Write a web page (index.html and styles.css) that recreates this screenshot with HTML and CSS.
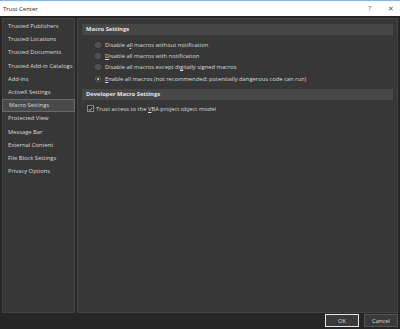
FILE: index.html
```html
<!DOCTYPE html>
<html>
<head>
<meta charset="utf-8">
<link rel="stylesheet" href="styles.css">
</head>
<body>
<div class="dialog">
  <div class="titlebar">
    <span class="title">Trust Center</span>
    <span class="tb-btns"><span class="help">?</span><span class="close">✕</span></span>
  </div>
  <div class="content">
    <div class="sidebar">
      <div class="item">Trusted Publishers</div>
      <div class="item">Trusted Locations</div>
      <div class="item">Trusted Documents</div>
      <div class="item">Trusted Add-in Catalogs</div>
      <div class="item">Add-ins</div>
      <div class="item">ActiveX Settings</div>
      <div class="item selected">Macro Settings</div>
      <div class="item">Protected View</div>
      <div class="item">Message Bar</div>
      <div class="item">External Content</div>
      <div class="item">File Block Settings</div>
      <div class="item">Privacy Options</div>
    </div>
    <div class="main">
      <div class="section-head">Macro Settings</div>
      <div class="options">
        <div class="opt"><span class="radio"></span><span>Disable a<u>l</u>l macros without notification</span></div>
        <div class="opt"><span class="radio"></span><span><u>D</u>isable all macros with notification</span></div>
        <div class="opt"><span class="radio"></span><span>Disable all macros except di<u>g</u>itally signed macros</span></div>
        <div class="opt"><span class="radio checked"></span><span><u>E</u>nable all macros (not recommended; potentially dangerous code can run)</span></div>
      </div>
      <div class="section-head">Developer Macro Settings</div>
      <div class="opt check-row"><span class="checkbox"><svg width="6" height="6" viewBox="0 0 6 6"><path d="M0.8 3.2 L2.3 4.7 L5.2 1.2" fill="none" stroke="#e8e8e8" stroke-width="0.9"/></svg></span><span>Trust access to the <u>V</u>BA project object model</span></div>
    </div>
  </div>
  <div class="footer">
    <button class="btn ok">OK</button>
    <button class="btn">Cancel</button>
  </div>
</div>
</body>
</html>
```

FILE: styles.css
```css
html, body {
  margin: 0;
  padding: 0;
  width: 400px;
  height: 329px;
  overflow: hidden;
  background: #262626;
  font-family: "Open Sans", "Noto Sans", sans-serif;
}
.dialog {
  display: flex;
  flex-direction: column;
  height: 329px;
}
.titlebar {
  height: 15px;
  border-top: 1px solid #8fb4da;
  background: #ffffff;
  display: flex;
  align-items: center;
  justify-content: space-between;
  padding: 0 6px 0 3px;
  font-size: 6px;
  color: #222;
}
.tb-btns {
  display: flex;
  gap: 17px;
  color: #555;
  font-size: 6.5px;
}
.content {
  display: flex;
  gap: 2px;
  padding: 2px 2px 0 2px;
  height: 295px;
}
.sidebar {
  width: 71px;
  background: #373737;
  border: 1px solid #444;
  padding-top: 1px;
  box-sizing: content-box;
  height: 292px;
}
.item {
  height: 13.2px;
  line-height: 13.2px;
  font-size: 5.8px;
  color: #dcdcdc;
  padding-left: 5px;
  white-space: nowrap;
  box-sizing: border-box;
}
.item.selected {
  background: #4a4a4a;
  border: 1px solid #6a6a6a;
  margin: 0 -1px;
  padding-left: 6px;
  line-height: 11.2px;
}
.main {
  flex: 1;
  background: #373737;
  border: 1px solid #444;
  padding: 5px 4px 0 4px;
  height: 288px;
  box-sizing: content-box;
}
.section-head {
  height: 11px;
  line-height: 11px;
  background: #474747;
  font-size: 5.8px;
  font-weight: bold;
  color: #e6e6e6;
  padding-left: 4px;
}
.options {
  padding: 4px 0 5px 13px;
  display: flex;
  flex-direction: column;
}
.opt {
  display: flex;
  align-items: center;
  height: 11.3px;
  font-size: 5.8px;
  color: #dcdcdc;
  gap: 4px;
  white-space: nowrap;
}
.opt u {
  text-decoration: underline;
}
.radio {
  width: 4px;
  height: 4px;
  border-radius: 50%;
  background: #4e4e4e;
  border: 0.5px solid #5a5a5a;
  flex: none;
}
.radio.checked {
  background: #2a2a2a;
  border-color: #666;
  position: relative;
}
.radio.checked::after {
  content: "";
  position: absolute;
  left: 1px;
  top: 1px;
  width: 2px;
  height: 2px;
  border-radius: 50%;
  background: #e8e8e8;
}
.check-row {
  padding: 3px 0 0 5px;
  gap: 2px;
}
.checkbox {
  width: 5px;
  height: 5px;
  border: 0.5px solid #888;
  background: #2c2c2c;
  display: flex;
  align-items: center;
  justify-content: center;
  flex: none;
}
.footer {
  display: flex;
  justify-content: flex-end;
  gap: 5px;
  padding: 1px 2px 0 0;
}
.btn {
  width: 34px;
  height: 13px;
  background: #3a3a3a;
  border: 1px solid #555;
  color: #dcdcdc;
  font-family: "Open Sans", "Noto Sans", sans-serif;
  font-size: 5.8px;
  padding: 0;
  margin: 0;
}
.btn.ok {
  border: 1px solid #e6e6e6;
}
```
